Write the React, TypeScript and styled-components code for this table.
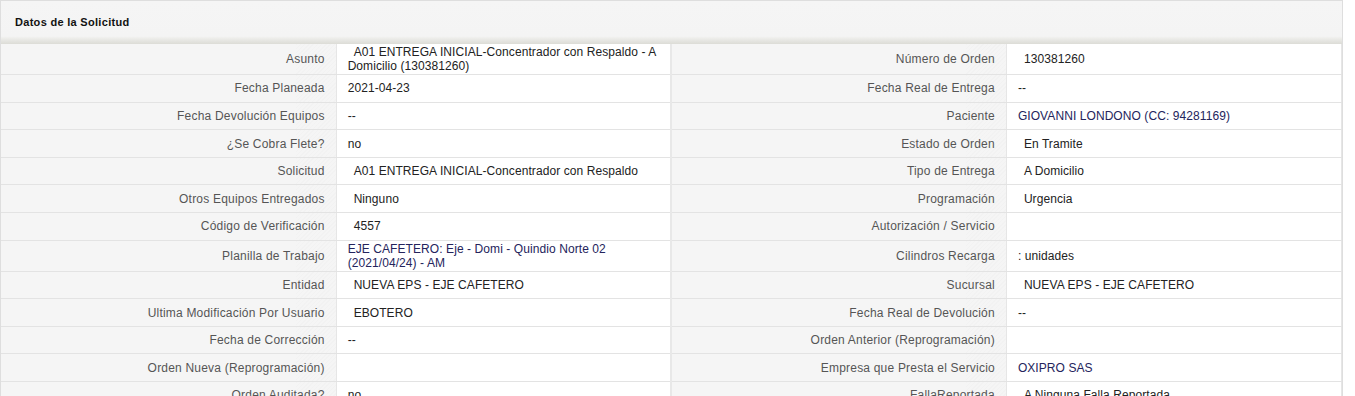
import React from "react";
import styled, { createGlobalStyle } from "styled-components";

const GlobalStyle = createGlobalStyle`
  html, body { margin: 0; padding: 0; background: #ffffff; }
  body { font-family: "Liberation Sans", Arial, sans-serif; }
`;

const Panel = styled.section`
  width: 1343px;
  box-sizing: border-box;
  border: 1px solid #dedede;
  border-bottom: none;
  background: #ffffff;
`;

const PanelHeader = styled.header`
  height: 43px;
  box-sizing: border-box;
  padding: 0 14px;
  display: flex;
  align-items: center;
  background: linear-gradient(
    to bottom,
    #f5f5f5 0%,
    #f4f4f4 82%,
    #ebebe8 88%,
    #dcdcd6 100%
  );
`;

const Title = styled.h2`
  margin: 0;
  font-size: 11px;
  font-weight: bold;
  letter-spacing: 0.3px;
  color: #111111;
  padding-bottom: 2px;
`;

const DetailTable = styled.table`
  width: 100%;
  border-collapse: collapse;
  table-layout: fixed;
  font-size: 12px;
  line-height: 14px;
`;

const Row = styled.tr``;

const Cell = styled.td`
  box-sizing: border-box;
  height: 27.62px;
  padding: 1px 10px;
  vertical-align: middle;
  border-bottom: 1px solid #e3e3e3;
  border-right: 1px solid #e6e6e6;
`;

const LabelCell = styled(Cell)`
  text-align: right;
  color: #555555;
  letter-spacing: 0.2px;
  padding-right: 11px;
  background-color: #f5f5f5;
  background-image: repeating-linear-gradient(
    135deg,
    rgba(0, 0, 0, 0.012) 0px,
    rgba(0, 0, 0, 0.012) 1px,
    transparent 1px,
    transparent 3px
  );
  background-size: 40px 100%;
  background-repeat: no-repeat;
  background-position: right top;
`;

const ValueCell = styled(Cell)<{ $navy?: boolean; $sep?: boolean }>`
  color: ${(p) => (p.$navy ? "#24245c" : "#222222")};
  letter-spacing: 0.08px;
  background: #ffffff;
  padding-left: 11px;
  padding-right: 6px;
  border-right: ${(p) => (p.$sep ? "2px solid #e8e8e8" : "1px solid #e6e6e6")};
`;

const Indent = styled.span`
  display: inline-block;
  width: 6px;
`;

type Value = { text: string; indent?: boolean; navy?: boolean };
type Item = { label: string; value: Value };

const left: Item[] = [
  { label: "Asunto", value: { text: "A01 ENTREGA INICIAL-Concentrador con Respaldo - A Domicilio (130381260)", indent: true } },
  { label: "Fecha Planeada", value: { text: "2021-04-23" } },
  { label: "Fecha Devolución Equipos", value: { text: "--" } },
  { label: "¿Se Cobra Flete?", value: { text: "no" } },
  { label: "Solicitud", value: { text: "A01 ENTREGA INICIAL-Concentrador con Respaldo", indent: true } },
  { label: "Otros Equipos Entregados", value: { text: "Ninguno", indent: true } },
  { label: "Código de Verificación", value: { text: "4557", indent: true } },
  { label: "Planilla de Trabajo", value: { text: "EJE CAFETERO: Eje - Domi - Quindio Norte 02 (2021/04/24) - AM", navy: true } },
  { label: "Entidad", value: { text: "NUEVA EPS - EJE CAFETERO", indent: true } },
  { label: "Ultima Modificación Por Usuario", value: { text: "EBOTERO", indent: true } },
  { label: "Fecha de Corrección", value: { text: "--" } },
  { label: "Orden Nueva (Reprogramación)", value: { text: "" } },
  { label: "Orden Auditada?", value: { text: "no" } },
];

const right: Item[] = [
  { label: "Número de Orden", value: { text: "130381260", indent: true } },
  { label: "Fecha Real de Entrega", value: { text: "--" } },
  { label: "Paciente", value: { text: "GIOVANNI LONDONO (CC: 94281169)", navy: true } },
  { label: "Estado de Orden", value: { text: "En Tramite", indent: true } },
  { label: "Tipo de Entrega", value: { text: "A Domicilio", indent: true } },
  { label: "Programación", value: { text: "Urgencia", indent: true } },
  { label: "Autorización / Servicio", value: { text: "" } },
  { label: "Cilindros Recarga", value: { text: ": unidades" } },
  { label: "Sucursal", value: { text: "NUEVA EPS - EJE CAFETERO", indent: true } },
  { label: "Fecha Real de Devolución", value: { text: "--" } },
  { label: "Orden Anterior (Reprogramación)", value: { text: "" } },
  { label: "Empresa que Presta el Servicio", value: { text: "OXIPRO SAS", navy: true } },
  { label: "FallaReportada", value: { text: "A Ninguna Falla Reportada", indent: true } },
];

const renderValue = (v: Value) => (
  <>
    {v.indent && <Indent />}
    {v.text}
  </>
);

export default function App() {
  return (
    <>
      <GlobalStyle />
      <Panel>
        <PanelHeader>
          <Title>Datos de la Solicitud</Title>
        </PanelHeader>
        <DetailTable>
          <colgroup>
            <col style={{ width: "25%" }} />
            <col style={{ width: "25%" }} />
            <col style={{ width: "25%" }} />
            <col style={{ width: "25%" }} />
          </colgroup>
          <tbody>
            {left.map((l, i) => {
              const r = right[i];
              return (
                <Row key={l.label}>
                  <LabelCell>{l.label}</LabelCell>
                  <ValueCell $navy={l.value.navy} $sep>
                    {renderValue(l.value)}
                  </ValueCell>
                  <LabelCell>{r.label}</LabelCell>
                  <ValueCell $navy={r.value.navy}>{renderValue(r.value)}</ValueCell>
                </Row>
              );
            })}
          </tbody>
        </DetailTable>
      </Panel>
    </>
  );
}
